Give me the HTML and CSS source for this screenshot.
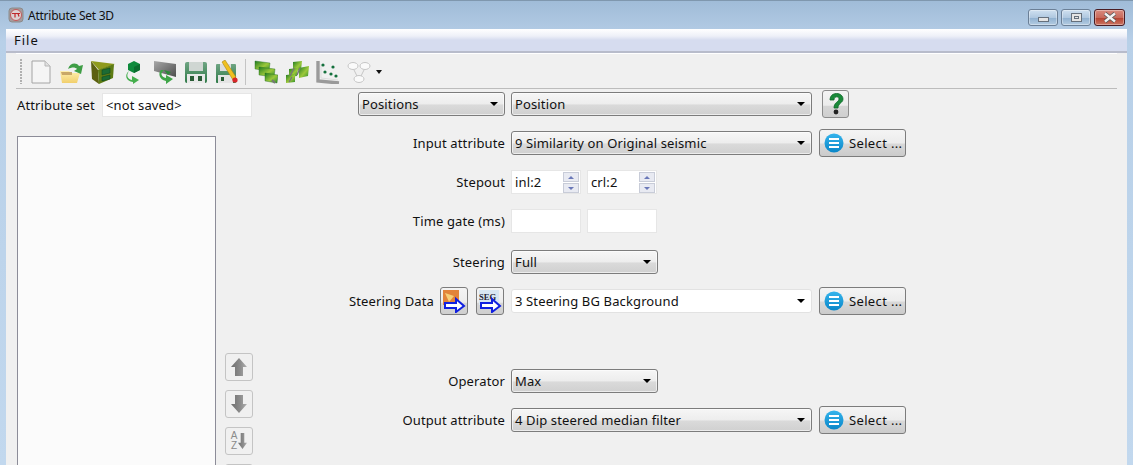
FILE: index.html
```
<!DOCTYPE html>
<html lang="en">
<head>
<meta charset="utf-8">
<title>Attribute Set 3D</title>
<link rel="stylesheet" href="styles.css">
</head>
<body>
<svg class="defs" aria-hidden="true">
  <defs>
    <linearGradient id="gGreen" x1="0" y1="0" x2="1" y2="1"><stop offset="0" stop-color="#1d7a22"/><stop offset=".55" stop-color="#9cc83a"/><stop offset="1" stop-color="#2c8c2c"/></linearGradient>
    <linearGradient id="gGrey" x1="0" y1="0" x2="1" y2="1"><stop offset="0" stop-color="#a8a8a8"/><stop offset="1" stop-color="#4e4e4e"/></linearGradient>
    <linearGradient id="gFolder" x1="0" y1="0" x2="0" y2="1"><stop offset="0" stop-color="#fff0b0"/><stop offset="1" stop-color="#f1cf6c"/></linearGradient>
    <linearGradient id="gBlue" x1="0" y1="0" x2="0" y2="1"><stop offset="0" stop-color="#35b4ec"/><stop offset="1" stop-color="#0a86c8"/></linearGradient>
    <linearGradient id="gArrow" x1="0" y1="0" x2="1" y2="0"><stop offset="0" stop-color="#6e6e6e"/><stop offset=".6" stop-color="#8e8e8e"/><stop offset="1" stop-color="#b0b0b0"/></linearGradient>
    <linearGradient id="gSave" x1="0" y1="0" x2="0" y2="1"><stop offset="0" stop-color="#6fa583"/><stop offset="1" stop-color="#2f7a48"/></linearGradient>
  </defs>
</svg>
<div class="window">
  <header class="titlebar">
    <svg class="app-icon" viewBox="0 0 16 16"><rect x="1" y="1" width="14" height="14" rx="3" fill="#a59a9c" stroke="#8c8c8c"/><circle cx="8" cy="8" r="5.5" fill="#ddd2d2" stroke="#c0595a"/><path d="M4 6.5h8M7 6.5v4M10 6.5l1 3" stroke="#c0282a" stroke-width="1.2" fill="none"/></svg>
    <span class="title">Attribute Set 3D</span>
    <div class="winbtns">
      <div class="winbtn"><span class="min-glyph"></span></div>
      <div class="winbtn"><span class="max-glyph"></span></div>
      <div class="winbtn close"><svg width="16" height="11" viewBox="0 0 16 11"><path d="M3 1.5l10 8M13 1.5l-10 8" stroke="#555" stroke-width="4"/><path d="M3 1.5l10 8M13 1.5l-10 8" stroke="#f2f2f2" stroke-width="2.4"/></svg></div>
    </div>
  </header>
  <div class="frame">
    <nav class="menubar"><span class="menu-item">File</span></nav>
    <div class="toolbar">
      <span class="handle"></span>
      <svg class="tool" viewBox="0 0 24 24"><path d="M3 1h13l5 5v17H3z" fill="#f5f5f5" stroke="#a4a4a4"/><path d="M16 1v5h5" fill="#e0e0e0" stroke="#b8b8b8"/></svg>
      <svg class="tool" viewBox="0 0 24 24"><path d="M0 11h9l2 2h9l-3 10H2z" fill="url(#gFolder)"/><path d="M1 12h11v3H2z" fill="#c9a868"/><path d="M8 9c2-6 8-7 11-3l4-1-2 9-7-3 3-2c-2-2-5-2-9 0z" fill="#3f9e46"/></svg>
      <svg class="tool" viewBox="0 0 24 24"><path d="M0 1l7 9 1 14-7-5z" fill="#5c6010"/><path d="M0 1l24 3-16 6z" fill="#8f9a1c"/><path d="M7 10l16-6-1 14-14 6z" fill="#5e7c14"/><path d="M11 10l8-2v5l-8 2zM11 17l8-2v4l-8 2z" fill="#1c6b34" stroke="#0e4a20" stroke-width=".6"/></svg>
      <svg class="tool" viewBox="0 0 24 24"><path d="M12 1l6 3v6l-6 3-6-3V4z" fill="#0f8a3c"/><path d="M12 7l6-3v6l-6 3z" fill="#0b6c2e"/><path d="M7 11c-3 4-2 8 3 9v-4l7 4-6 4v-2c-7-1-9-7-4-11z" fill="#44ae4c"/></svg>
      <svg class="tool" viewBox="0 0 24 24"><path d="M1 1l22 3v13L1 11z" fill="url(#gGrey)"/><path d="M11 10c-4 3-3 7 2 8v-3l7 4-7 5v-3c-7-1-8-8-5-11z" fill="#3fa548"/><path d="M11 10l7 2-3 3z" fill="#2c8a38"/></svg>
      <svg class="tool" viewBox="0 0 24 24"><rect x="1" y="2" width="22" height="21" rx="2" fill="url(#gSave)"/><rect x="5" y="2" width="14" height="9" fill="#cfd6d2"/><rect x="3" y="14" width="18" height="9" fill="#e8e8e8"/><rect x="6" y="16" width="4" height="5" fill="#2a5c36"/><rect x="14" y="16" width="4" height="5" fill="#2a5c36"/></svg>
      <svg class="tool" viewBox="0 0 24 24"><rect x="1" y="4" width="20" height="19" rx="1" fill="url(#gSave)"/><rect x="5" y="4" width="11" height="7" fill="#ddd"/><rect x="3" y="15" width="15" height="8" fill="#e4e4e4"/><rect x="6" y="17" width="3" height="4" fill="#2a5c36"/><path d="M7 2l3-2 11 17-3 3z" fill="#f0c020" stroke="#a88414" stroke-width=".6"/><circle cx="20" cy="20" r="2.6" fill="#d8262a"/></svg>
      <span class="tool-sep"></span>
      <svg class="tool" viewBox="0 0 24 24"><path d="M1 1l15 2-1 8L1 9z" fill="url(#gGreen)" stroke="#1d6a1d" stroke-width=".4"/><path d="M5 7l16 2-1 8-15-2z" fill="url(#gGreen)" stroke="#1d6a1d" stroke-width=".4"/><path d="M11 13l13 2-1 8-12-2z" fill="url(#gGreen)" stroke="#1d6a1d" stroke-width=".4"/><path d="M18 20l3 3" stroke="#777" stroke-width="2"/></svg>
      <svg class="tool" viewBox="0 0 24 24"><path d="M8 2l9-1-1 9-8 1z" fill="url(#gGreen)"/><path d="M14 8l10-2-1 10-9 2z" fill="url(#gGreen)"/><path d="M4 9l9-1-1 8-8 1z" fill="url(#gGreen)"/><path d="M1 15l9-1v8l-9 1z" fill="url(#gGreen)"/><path d="M9 8l-4 8M15 8l-3 7M7 17l-3 5" stroke="#777" stroke-width="1.4"/></svg>
      <svg class="tool" viewBox="0 0 24 24"><path d="M2 1v20l21 2" fill="none" stroke="#9a9a9a" stroke-width="3.4"/><path d="M5 4v14l17 2" fill="none" stroke="#ddd" stroke-width="1"/><g fill="#14703c"><circle cx="7" cy="5" r="1.6"/><circle cx="17" cy="7" r="1.6"/><circle cx="9" cy="12" r="1.6"/><circle cx="15" cy="14" r="1.6"/><circle cx="20" cy="16" r="1.6"/></g></svg>
      <svg class="tool" viewBox="0 0 24 24"><g fill="#fafafa" stroke="#c6c6c6"><ellipse cx="6" cy="6" rx="5" ry="3.5"/><ellipse cx="18" cy="6" rx="5" ry="3.5"/><ellipse cx="12" cy="19" rx="5" ry="3.5"/></g><path d="M7 10l3 6M17 10l-3 6" stroke="#c6c6c6" fill="none"/></svg>
      <span class="tool-caret"></span>
    </div>
    <main class="content">
      <div class="attr-row">
        <label class="attr-label">Attribute set</label>
        <div class="textbox attr-input">&lt;not saved&gt;</div>
      </div>
      <div class="attr-list"></div>
      <div class="list-btns">
        <button class="sq faded"><svg viewBox="0 0 18 18"><path d="M9 0l8 9h-4v9H5V9H1z" fill="url(#gArrow)"/></svg></button>
        <button class="sq faded"><svg viewBox="0 0 18 18"><path d="M9 18l8-9h-4V0H5v9H1z" fill="url(#gArrow)"/></svg></button>
        <button class="sq faded"><span class="az">A<br>Z</span><svg class="az-arrow" viewBox="0 0 10 18"><path d="M5 18l5-7H7V0H3v11H0z" fill="url(#gArrow)"/></svg></button>
        <button class="sq faded"></button>
      </div>
      <section class="form">
        <div class="row">
          <div class="lab"><div class="combo w-type"><span>Positions</span></div></div>
          <div class="fields"><div class="combo w-long"><span>Position</span></div>
            <button class="sq help"><svg viewBox="0 0 20 24" width="20" height="24"><path d="M4 8c0-9 13-8 13-1 0 4-5 4-5 9H8c0-6 5-6 5-9 0-3-5-3-5 1z" fill="#1a8a3a" stroke="#0f6a2a" stroke-width=".8"/><circle cx="10" cy="20" r="2.4" fill="#222"/></svg></button></div>
        </div>
        <div class="row">
          <div class="lab">Input attribute</div>
          <div class="fields"><div class="combo w-long"><span>9 Similarity on Original seismic</span></div>
            <button class="select"><svg class="sel-icon" viewBox="0 0 20 20"><circle cx="10" cy="10" r="9.5" fill="url(#gBlue)"/><path d="M5 6h10M5 10h10M5 14h10" stroke="#fff" stroke-width="2.2"/></svg>Select ...</button></div>
        </div>
        <div class="row">
          <div class="lab">Stepout</div>
          <div class="fields pair">
            <div class="textbox spin">inl:2<span class="spinners"><i class="up"></i><i class="down"></i></span></div>
            <div class="textbox spin">crl:2<span class="spinners"><i class="up"></i><i class="down"></i></span></div>
          </div>
        </div>
        <div class="row">
          <div class="lab">Time gate (ms)</div>
          <div class="fields pair"><div class="textbox spin"></div><div class="textbox spin"></div></div>
        </div>
        <div class="row steering">
          <div class="lab">Steering</div>
          <div class="fields"><div class="combo w-short"><span>Full</span></div></div>
        </div>
        <div class="row">
          <div class="lab lab-btns"><span>Steering Data</span>
            <button class="sq first"><svg viewBox="0 0 24 24" width="24" height="24"><rect x="1" y="1" width="16" height="15" fill="#e2843a"/><path d="M3 4l9 3-5 6z" fill="#f6cf78"/><path d="M3 14h11v-4l8 7-8 6v-4H3z" fill="#fff" stroke="#1020e0" stroke-width="2"/></svg></button>
            <button class="sq"><svg viewBox="0 0 24 24" width="24" height="24"><rect x="1" y="1" width="20" height="15" fill="#d8e6f2"/><text x="1" y="11" class="seg">SEG</text><path d="M3 14h11v-4l8 7-8 6v-4H3z" fill="#fff" stroke="#1020e0" stroke-width="2"/></svg></button>
          </div>
          <div class="fields"><div class="combo w-long editable"><span>3 Steering BG Background</span></div>
            <button class="select"><svg class="sel-icon" viewBox="0 0 20 20"><circle cx="10" cy="10" r="9.5" fill="url(#gBlue)"/><path d="M5 6h10M5 10h10M5 14h10" stroke="#fff" stroke-width="2.2"/></svg>Select ...</button></div>
        </div>
        <div class="row operator">
          <div class="lab">Operator</div>
          <div class="fields"><div class="combo w-short"><span>Max</span></div></div>
        </div>
        <div class="row">
          <div class="lab">Output attribute</div>
          <div class="fields"><div class="combo w-long"><span>4 Dip steered median filter</span></div>
            <button class="select"><svg class="sel-icon" viewBox="0 0 20 20"><circle cx="10" cy="10" r="9.5" fill="url(#gBlue)"/><path d="M5 6h10M5 10h10M5 14h10" stroke="#fff" stroke-width="2.2"/></svg>Select ...</button></div>
        </div>
      </section>
    </main>
  </div>
</div>
</body>
</html>
```
FILE: styles.css
```
* { box-sizing: border-box; }
html, body { margin: 0; height: 465px; overflow: hidden; }
body { font-family: "Noto Sans", "Open Sans", sans-serif; font-size: 13px; letter-spacing: .13px; color: #111; background: #bcd4ec; }
.defs { position: absolute; width: 0; height: 0; }
.window { height: 465px; display: flex; flex-direction: column; background: linear-gradient(#a0bcd8, #b8d0e8 40px, #c2d8ee); border-top: 1px solid #7f97ae; }
.titlebar { height: 28px; flex: none; display: flex; align-items: center; padding: 0 8px 0 8px; }
.app-icon { width: 16px; height: 16px; margin-right: 4px; }
.title { font-size: 12px; letter-spacing: -.25px; color: #111; }
.winbtns { margin-left: auto; display: flex; gap: 3px; align-self: flex-start; margin-top: 8px; }
.winbtn { width: 30px; height: 17px; border: 1px solid #6b7f96; border-radius: 3px; background: linear-gradient(#cfe0f0, #b0c8e0 50%, #8fb0d0 52%, #b4cce2); display: flex; align-items: center; justify-content: center; box-shadow: inset 0 0 0 1px rgba(255,255,255,.35); }
.winbtn.close { width: 31px; border-color: #4a1d24; background: linear-gradient(#d98a7e, #c86a5c 50%, #b4402f 52%, #cc7664); }
.min-glyph { width: 11px; height: 5px; margin-top: 3px; background: #e4e4e4; border: 1px solid #66707c; }
.max-glyph { width: 11px; height: 9px; background: #e4e4e4; border: 1px solid #66707c; box-shadow: inset 0 0 0 2px #e4e4e4, inset 0 0 0 3px #66707c; }
.frame { flex: 1; margin: 0 6px; display: flex; flex-direction: column; background: #f0f0f0; min-height: 0; overflow: hidden; }
.menubar { height: 24px; flex: none; background: linear-gradient(#fff, #eef0f8 7px, #d6dcef 11px, #d6dcef); border-bottom: 2px solid #b8bccb; padding-left: 8px; display: flex; align-items: center; }
.menu-item { font-size: 13px; letter-spacing: 1px; }
.toolbar { height: 36px; flex: none; margin: 0 10px; border-bottom: 1px solid #bcbcbc; display: flex; align-items: center; gap: 7px; border-top: 1px solid #fff; padding-top: 1px; }
.handle { width: 2px; height: 25px; margin: 0 0 0 4px; background: repeating-linear-gradient(#b0b0b0 0 2px, transparent 2px 3px); }
.tool { width: 24px; height: 24px; flex: none; }
.tool-sep { width: 1px; height: 26px; background: #c4c4c4; margin: 0 1px 0 -1px; }
.tool-caret { width: 0; height: 0; margin-left: -2px; border: 3.5px solid transparent; border-top: 4px solid #111; border-bottom: 0; }
.content { flex: 1; display: grid; grid-template-columns: 199px 28px 1fr; grid-template-rows: 47px minmax(0, 1fr); column-gap: 9px; padding-left: 11px; min-height: 0; }
.attr-row { grid-column: 1 / 3; grid-row: 1; display: flex; align-items: flex-start; padding-top: 4px; }
.attr-label { width: 85px; line-height: 24px; }
.textbox { background: #fff; border: 1px solid #e6e6e6; line-height: 22px; height: 24px; padding-left: 3px; }
.attr-input { width: 150px; }
.attr-list { grid-column: 1; grid-row: 2; background: #fbfbfb; border: 1px solid #8c8c98; border-bottom: 0; }
.list-btns { grid-column: 2; grid-row: 2; display: flex; flex-direction: column; gap: 9px; padding-top: 217px; min-height: 0; overflow: hidden; }
.sq { width: 28px; height: 28px; padding: 0; flex: none; border: 1px solid #7c7c7c; border-radius: 3px; background: linear-gradient(#f4f4f4, #ececec 55%, #d6d6d6 58%, #cfcfcf); display: inline-flex; align-items: center; justify-content: center; }
.sq.faded { border-color: #c4c4c4; background: #f0f0f0; }
.sq.faded svg { width: 18px; height: 18px; }
.sq.faded .az-arrow { width: 9px; height: 18px; }
.az { font-size: 10px; line-height: 10px; color: #8a8a8a; margin-right: 1px; }
.form { grid-column: 3; grid-row: 1 / 3; display: flex; flex-direction: column; gap: 11px; padding-top: 1px; min-height: 0; }
.row { display: flex; height: 28px; flex: none; align-items: center; }
.row.steering { margin-top: 2px; }
.row.operator { margin-top: 41px; }
.lab { width: 243px; flex: none; display: flex; justify-content: flex-end; align-items: center; white-space: nowrap; }
.lab-btns { padding-right: 1px; }
.fields { margin-left: 6px; display: flex; align-items: center; }
.pair { gap: 6px; }
.combo { height: 24px; position: relative; border: 1px solid #7c7c7c; border-radius: 3px; background: linear-gradient(#f6f6f6, #ededed 50%, #dadada 54%, #d0d0d0); padding-left: 3px; line-height: 23px; box-shadow: inset 0 0 0 1px rgba(255,255,255,.6); }
.combo::after { content: ""; position: absolute; right: 6px; top: 9px; border: 4px solid transparent; border-top: 4px solid #000; border-bottom: 0; }
.combo.editable { background: #fff; border-color: #e2e2e2; box-shadow: none; }
.w-type { width: 147px; }
.w-long { width: 301px; }
.w-short { width: 147px; }
.help { width: 27px; margin-left: 10px; border-color: #8c8c8c; }
.select { width: 87px; height: 28px; margin-left: 7px; padding: 0 0 0 3px; border: 1px solid #7c7c7c; border-radius: 3px; background: linear-gradient(#f4f4f4, #ececec 50%, #d8d8d8 54%, #cbcbcb); font: inherit; letter-spacing: .35px; color: #111; display: flex; align-items: center; gap: 5px; white-space: nowrap; }
.sel-icon { width: 20px; height: 20px; flex: none; margin-left: 1px; }
.first { margin-left: 6px; }
.lab .sq + .sq { margin-left: 8px; }
.seg { font: bold 8.5px "Liberation Serif", serif; fill: #223; }
.spin { width: 70px; position: relative; }
.spinners { position: absolute; right: 1px; top: 1px; width: 16px; display: flex; flex-direction: column; gap: 1px; }
.spinners i { height: 10px; background: #e8eaf2; border: 1px solid #c8ccd8; display: flex; align-items: center; justify-content: center; }
.spinners i::after { content: ""; border: 3px solid transparent; }
.up::after { border-bottom: 3px solid #6a78b8 !important; border-top: 0 !important; }
.down::after { border-top: 3px solid #6a78b8 !important; border-bottom: 0 !important; }
```
